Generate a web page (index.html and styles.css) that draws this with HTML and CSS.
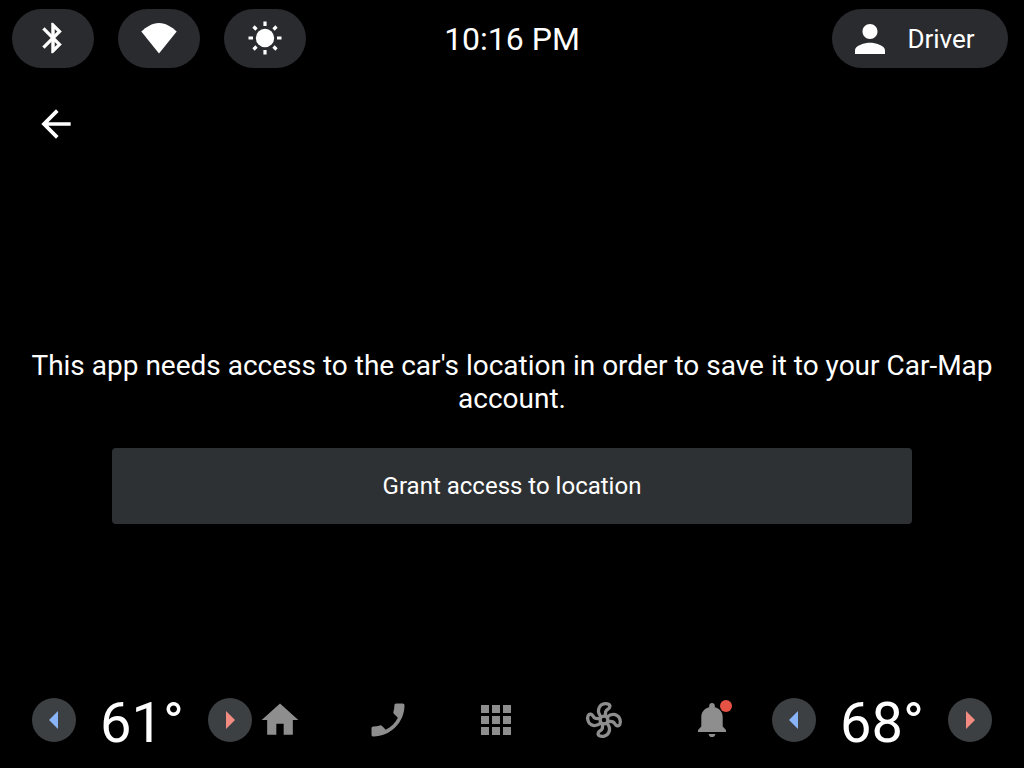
FILE: index.html
```html
<!DOCTYPE html>
<html lang="en">
<head>
<meta charset="utf-8">
<meta name="viewport" content="width=device-width, initial-scale=1">
<title>Location access</title>
<link rel="stylesheet" href="styles.css">
</head>
<body>
<header class="status-bar">
  <div class="quick-controls">
    <button class="pill" type="button" aria-label="Bluetooth">
      <svg width="36" height="36" viewBox="0 0 24 24" fill="currentColor" stroke="currentColor" stroke-width=".3"><path d="M17.710 7.710L12 2h-1v7.590L6.410 5 5 6.410 10.590 12 5 17.590 6.410 19 11 14.410V22h1l5.710-5.710-4.300-4.290 4.300-4.290zM13 5.830l1.880 1.880L13 9.590V5.830zm1.880 10.460L13 18.170v-3.760l1.880 1.880z"/></svg>
    </button>
    <button class="pill" type="button" aria-label="Wi-Fi">
      <svg width="36" height="36" viewBox="0 0 36 36" fill="currentColor"><path d="M18 33.500L0.300 11.500C5 7.200 11 3 18 3s13 4.200 17.700 8.500z"/></svg>
    </button>
    <button class="pill" type="button" aria-label="Brightness">
      <svg width="36" height="36" viewBox="0 0 36 36" fill="currentColor"><circle cx="18" cy="18" r="9.200"/><g stroke="currentColor" stroke-width="3.200"><path d="M18 1.500v4.500M18 30v4.500M1.500 18H6M30 18h4.500M6.500 6.500l3 3M26.500 26.500l3 3M6.500 29.500l3-3M26.500 9.500l3-3"/></g></svg>
    </button>
  </div>
  <time class="clock">10:16 PM</time>
  <button class="pill profile" type="button">
    <svg width="30" height="30" viewBox="4 4 16 16" fill="currentColor"><path d="M12 12c2.210 0 4-1.790 4-4s-1.790-4-4-4-4 1.790-4 4 1.790 4 4 4zm0 2c-2.670 0-8 1.340-8 4v2h16v-2c0-2.660-5.330-4-8-4z"/></svg>
    <span>Driver</span>
  </button>
</header>

<div class="toolbar">
  <button class="icon-button" type="button" aria-label="Back">
    <svg width="44" height="44" viewBox="0 0 24 24" fill="currentColor"><path d="M20 11H7.830l5.590-5.590L12 4l-8 8 8 8 1.410-1.410L7.830 13H20v-2z"/></svg>
  </button>
</div>

<main class="content">
  <p class="message">This app needs access to the car's location in order to save it to your Car-Map account.</p>
  <button class="grant" type="button">Grant access to location</button>
</main>

<footer class="system-bar">
  <div class="climate">
    <button class="temp-button cooler" type="button" aria-label="Decrease left temperature">
      <svg width="20" height="20" viewBox="0 0 20 20" fill="currentColor"><path d="M14 1v18L5 10z"/></svg>
    </button>
    <output class="temp">61°</output>
    <button class="temp-button warmer" type="button" aria-label="Increase left temperature">
      <svg width="20" height="20" viewBox="0 0 20 20" fill="currentColor"><path d="M6 1v18l9-9z"/></svg>
    </button>
  </div>
  <nav class="apps">
    <button class="icon-button" type="button" aria-label="Home">
      <svg width="44" height="44" viewBox="0 0 24 24" fill="currentColor"><path d="M10 20v-6h4v6h5v-8h3L12 3 2 12h3v8z"/></svg>
    </button>
    <button class="icon-button" type="button" aria-label="Phone">
      <svg width="44" height="44" viewBox="0 0 24 24" fill="currentColor"><path transform="translate(24 0) scale(-1 1)" d="M6.620 10.790c1.440 2.830 3.760 5.140 6.590 6.590l2.200-2.200c.27-.27.67-.36 1.020-.24 1.120.37 2.330.57 3.570.57.55 0 1 .45 1 1V20c0 .55-.45 1-1 1-9.390 0-17-7.610-17-17 0-.55.45-1 1-1h3.500c.55 0 1 .45 1 1 0 1.250.2 2.450.57 3.570.11.35.03.74-.25 1.020l-2.200 2.200z"/></svg>
    </button>
    <button class="icon-button" type="button" aria-label="Apps">
      <svg width="44" height="44" viewBox="0 0 44 44" fill="currentColor"><path d="M7 7h8v8H7zM18 7h8v8h-8zM29 7h8v8h-8zM7 18h8v8H7zM18 18h8v8h-8zM29 18h8v8h-8zM7 29h8v8H7zM18 29h8v8h-8zM29 29h8v8h-8z"/></svg>
    </button>
    <button class="icon-button" type="button" aria-label="Climate">
      <svg width="44" height="44" viewBox="-22 -22 44 44" fill="none" stroke="currentColor" stroke-width="3.300" stroke-linejoin="round">
        <circle r="3.900"/>
        <path id="blade" d="M-2.800-3C-5.500-6-6.200-10-4.500-13C-3-16.200 2-17 4.500-15.800C6.800-14.500 6-12 3.800-10.800C1.500-9.500 1-7 1.800-4"/>
        <use href="#blade" transform="rotate(90)"/>
        <use href="#blade" transform="rotate(180)"/>
        <use href="#blade" transform="rotate(270)"/>
      </svg>
    </button>
    <button class="icon-button notifications" type="button" aria-label="Notifications, new">
      <svg width="44" height="44" viewBox="0 0 44 44" fill="currentColor"><path d="M22 5c-1.700 0-2.800 1.200-2.800 2.800v1.400C14.500 10.400 11.300 14 11.300 19v9.500L8 32v2h28v-2l-3.300-3.500V19c0-5-3.200-8.600-7.900-9.800V7.800C24.800 6.200 23.700 5 22 5zM18.700 36h6.600c0 1.900-1.400 3.100-3.300 3.100s-3.300-1.200-3.300-3.100z"/></svg>
      <span class="badge"></span>
    </button>
  </nav>
  <div class="climate">
    <button class="temp-button cooler" type="button" aria-label="Decrease right temperature">
      <svg width="20" height="20" viewBox="0 0 20 20" fill="currentColor"><path d="M14 1v18L5 10z"/></svg>
    </button>
    <output class="temp">68°</output>
    <button class="temp-button warmer" type="button" aria-label="Increase right temperature">
      <svg width="20" height="20" viewBox="0 0 20 20" fill="currentColor"><path d="M6 1v18l9-9z"/></svg>
    </button>
  </div>
</footer>
</body>
</html>
```
FILE: styles.css
```css
* {
  box-sizing: border-box;
}

body {
  margin: 0;
  min-height: 100vh;
  display: flex;
  flex-direction: column;
  background: #000;
  color: #fff;
  font-family: Roboto, "Liberation Sans", sans-serif;
}

button {
  margin: 0;
  padding: 0;
  border: 0;
  background: none;
  color: inherit;
  font: inherit;
  cursor: pointer;
}

svg {
  display: block;
}

.status-bar {
  display: grid;
  grid-template-columns: 1fr auto 1fr;
  align-items: center;
  padding: 9px 12px;
}

.quick-controls {
  display: flex;
  gap: 24px;
}

.pill {
  display: flex;
  align-items: center;
  justify-content: center;
  width: 82px;
  height: 59px;
  padding-bottom: 2px;
  border-radius: 30px;
  background: #2a2b2f;
}

.profile {
  justify-self: end;
  width: 176px;
  margin-right: 4px;
  gap: 22px;
  padding: 0 10px 0 0;
  font-size: 26px;
}

.clock {
  font-size: 32px;
  line-height: 40px;
}

.toolbar {
  display: flex;
  padding: 25px 34px;
}

.icon-button {
  width: 44px;
  height: 44px;
}

.content {
  flex: 1;
  display: flex;
  flex-direction: column;
  align-items: center;
  justify-content: center;
  gap: 33px;
  padding: 29px 24px 0;
}

.message {
  margin: 0;
  font-size: 28px;
  line-height: 33px;
  text-align: center;
}

.grant {
  width: 100%;
  max-width: 800px;
  height: 76px;
  border-radius: 4px;
  background: #2e3134;
  font-size: 24px;
}

.system-bar {
  display: flex;
  align-items: center;
  height: 96px;
  padding: 0 32px;
}

.climate {
  display: flex;
  align-items: center;
  justify-content: space-between;
  width: 220px;
}

.temp {
  padding-top: 5px;
  font-size: 56px;
  line-height: 64px;
}

.temp-button {
  display: flex;
  align-items: center;
  justify-content: center;
  width: 44px;
  height: 44px;
  border-radius: 50%;
  background: #3c4043;
}

.cooler {
  color: #8ab4f8;
}

.warmer {
  color: #f28b82;
}

.apps {
  flex: 1;
  display: flex;
  justify-content: space-between;
  padding: 0 38px 0 6px;
  color: #8e8e8e;
}

.notifications {
  position: relative;
}

.badge {
  position: absolute;
  top: 2px;
  right: 2px;
  width: 12px;
  height: 12px;
  border-radius: 50%;
  background: #e65345;
}
```
